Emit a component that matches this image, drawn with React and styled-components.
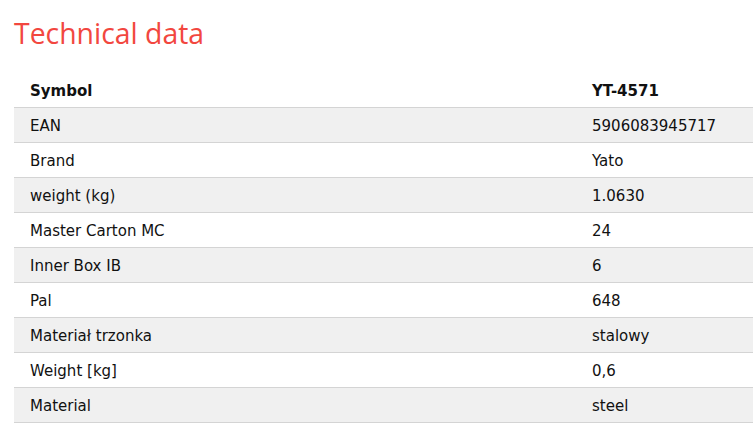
import styled, { createGlobalStyle } from "styled-components";

const GlobalStyle = createGlobalStyle`
  body {
    margin: 0;
    background: #fff;
    overflow: hidden;
  }
`;

const Section = styled.section`
  padding: 14px 0 0 14px;
`;

const Title = styled.h2`
  margin: 0 0 21px;
  font-family: "Open Sans", sans-serif;
  font-weight: 400;
  font-size: 28.4px;
  line-height: 38px;
  color: #f2473f;
`;

const Table = styled.table`
  width: 739px;
  border-collapse: collapse;
  font-family: "DejaVu Sans", Verdana, sans-serif;
  font-size: 15px;
  color: #111;
`;

const Row = styled.tr`
  background: ${(p) => (p.$shaded ? "#f0f0f0" : "#fff")};
  border-bottom: 1px solid #d4d4d4;
`;

const Cell = styled.td`
  height: 33px;
  padding: 1px 16px 0;
  vertical-align: middle;
  font-weight: ${(p) => (p.$head ? 700 : 400)};
  width: ${(p) => (p.$label ? "530px" : "auto")};
`;

const rows = [
  ["EAN", "5906083945717"],
  ["Brand", "Yato"],
  ["weight (kg)", "1.0630"],
  ["Master Carton MC", "24"],
  ["Inner Box IB", "6"],
  ["Pal", "648"],
  ["Materiał trzonka", "stalowy"],
  ["Weight [kg]", "0,6"],
  ["Material", "steel"],
];

export default function App() {
  return (
    <>
      <GlobalStyle />
      <Section>
        <Title>Technical data</Title>
        <Table>
          <tbody>
            <Row>
              <Cell $head $label>Symbol</Cell>
              <Cell $head>YT-4571</Cell>
            </Row>
            {rows.map(([k, v], i) => (
              <Row key={k} $shaded={i % 2 === 0}>
                <Cell $label>{k}</Cell>
                <Cell>{v}</Cell>
              </Row>
            ))}
          </tbody>
        </Table>
      </Section>
    </>
  );
}
